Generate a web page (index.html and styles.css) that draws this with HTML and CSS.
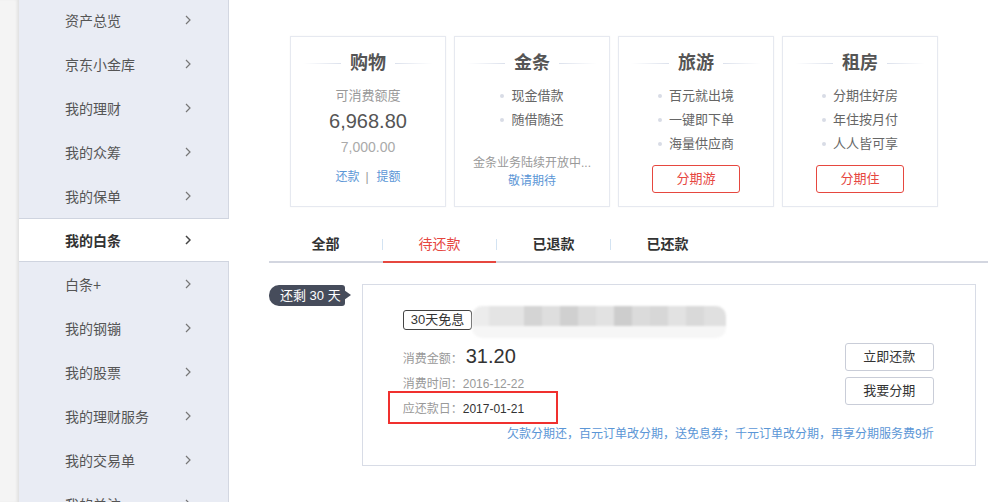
FILE: index.html
```html
<!DOCTYPE html>
<html lang="zh-CN">
<head>
    <meta charset="UTF-8">
    <title>我的白条</title>
    <link rel="stylesheet" href="styles.css">
</head>
<body>
    <div class="page">
        <div class="edge"></div>

        <ul class="side-nav">
            <li class="nav-item"><span>资产总览</span><svg class="chev" viewBox="0 0 6 10"><path d="M1 1l4 4-4 4"/></svg></li>
            <li class="nav-item"><span>京东小金库</span><svg class="chev" viewBox="0 0 6 10"><path d="M1 1l4 4-4 4"/></svg></li>
            <li class="nav-item"><span>我的理财</span><svg class="chev" viewBox="0 0 6 10"><path d="M1 1l4 4-4 4"/></svg></li>
            <li class="nav-item"><span>我的众筹</span><svg class="chev" viewBox="0 0 6 10"><path d="M1 1l4 4-4 4"/></svg></li>
            <li class="nav-item"><span>我的保单</span><svg class="chev" viewBox="0 0 6 10"><path d="M1 1l4 4-4 4"/></svg></li>
            <li class="nav-item active"><span>我的白条</span><svg class="chev" viewBox="0 0 6 10"><path d="M1 1l4 4-4 4"/></svg></li>
            <li class="nav-item"><span>白条+</span><svg class="chev" viewBox="0 0 6 10"><path d="M1 1l4 4-4 4"/></svg></li>
            <li class="nav-item"><span>我的钢镚</span><svg class="chev" viewBox="0 0 6 10"><path d="M1 1l4 4-4 4"/></svg></li>
            <li class="nav-item"><span>我的股票</span><svg class="chev" viewBox="0 0 6 10"><path d="M1 1l4 4-4 4"/></svg></li>
            <li class="nav-item"><span>我的理财服务</span><svg class="chev" viewBox="0 0 6 10"><path d="M1 1l4 4-4 4"/></svg></li>
            <li class="nav-item"><span>我的交易单</span><svg class="chev" viewBox="0 0 6 10"><path d="M1 1l4 4-4 4"/></svg></li>
            <li class="nav-item"><span>我的关注</span><svg class="chev" viewBox="0 0 6 10"><path d="M1 1l4 4-4 4"/></svg></li>
        </ul>

        <div class="main">
            <div class="cards">
                <div class="card">
                    <h3 class="card-title"><span>购物</span></h3>
                    <p class="sub">可消费额度</p>
                    <p class="amount">6,968.80</p>
                    <p class="total">7,000.00</p>
                    <p class="links"><a>还款</a><i>|</i><a>提额</a></p>
                </div>
                <div class="card">
                    <h3 class="card-title"><span>金条</span></h3>
                    <ul class="points">
                        <li>现金借款</li>
                        <li>随借随还</li>
                    </ul>
                    <p class="note">金条业务陆续开放中...</p>
                    <p class="wait">敬请期待</p>
                </div>
                <div class="card">
                    <h3 class="card-title"><span>旅游</span></h3>
                    <ul class="points">
                        <li>百元就出境</li>
                        <li>一键即下单</li>
                        <li>海量供应商</li>
                    </ul>
                    <a class="red-btn">分期游</a>
                </div>
                <div class="card">
                    <h3 class="card-title"><span>租房</span></h3>
                    <ul class="points">
                        <li>分期住好房</li>
                        <li>年住按月付</li>
                        <li>人人皆可享</li>
                    </ul>
                    <a class="red-btn">分期住</a>
                </div>
            </div>

            <div class="tabs">
                <a class="tab">全部</a>
                <span class="sep"></span>
                <a class="tab active">待还款</a>
                <span class="sep"></span>
                <a class="tab">已退款</a>
                <span class="sep"></span>
                <a class="tab">已还款</a>
            </div>

            <div class="order-row">
                <div class="days">还剩 30 天</div>
                <div class="order">
                    <div class="order-head">
                        <span class="tag">30天免息</span>
                        <span class="blur"></span>
                    </div>
                    <div class="order-body">
                        <div class="info">
                            <p class="line big"><span class="label">消费金额：</span><span class="money">31.20</span></p>
                            <p class="line"><span class="label">消费时间：</span><span class="gray">2016-12-22</span></p>
                            <p class="line due"><span class="label">应还款日：</span><span>2017-01-21</span></p>
                        </div>
                        <div class="actions">
                            <a class="btn">立即还款</a>
                            <a class="btn">我要分期</a>
                        </div>
                    </div>
                    <p class="promo">欠款分期还，百元订单改分期，送免息券；千元订单改分期，再享分期服务费9折</p>
                </div>
            </div>
        </div>
    </div>
</body>
</html>
```

FILE: styles.css
```css
body {
    margin: 0;
    font-family: "Liberation Sans", "Noto Sans CJK SC", sans-serif;
    color: #333;
    background-color: #fff;
    overflow: hidden;
}

p, ul, h3 {
    margin: 0;
    padding: 0;
}

ul {
    list-style: none;
}

a {
    cursor: pointer;
}

.page {
    display: flex;
    height: 502px;
}

.edge {
    width: 19px;
    flex-shrink: 0;
    background-color: #f4f4f4;
    box-shadow: inset -3px 0 3px -1px rgba(0, 0, 0, 0.08);
}

/* side menu */
.side-nav {
    width: 209px;
    flex-shrink: 0;
    margin-top: -2px;
    background-color: #e9ecf4;
    border-right: 1px solid #d3d7e1;
}

.nav-item {
    height: 44px;
    display: flex;
    align-items: center;
    justify-content: space-between;
    padding: 0 37px 0 46px;
    font-size: 14px;
    color: #555;
    box-sizing: border-box;
}

.nav-item.active {
    background-color: #fff;
    border-top: 1px solid #cfd4df;
    border-bottom: 1px solid #cfd4df;
    margin-right: -1px;
    padding-right: 38px;
    font-weight: bold;
    color: #333;
}

.chev {
    width: 6px;
    height: 10px;
    fill: none;
    stroke: #777;
    stroke-width: 1.2;
}

.active .chev {
    stroke: #444;
    stroke-width: 1.5;
}

/* main */
.main {
    flex: 1;
    padding: 36px 12px 0 40px;
}

.cards {
    display: flex;
    gap: 8px;
    margin-left: 21px;
}

.card {
    width: 156px;
    height: 171px;
    box-sizing: border-box;
    border: 1px solid #e6e9f0;
    box-shadow: 0 0 2px rgba(0, 0, 0, 0.04);
    text-align: center;
    padding-top: 14px;
}

.card-title {
    display: flex;
    align-items: center;
    justify-content: center;
    gap: 9px;
    font-size: 18px;
    line-height: 24px;
    color: #555;
}

.card-title::before,
.card-title::after {
    content: "";
    width: 38px;
    height: 1px;
}

.card-title::before {
    background: linear-gradient(to right, rgba(220, 225, 236, 0), #dce1ec);
}

.card-title::after {
    background: linear-gradient(to left, rgba(220, 225, 236, 0), #dce1ec);
}

.sub {
    margin-top: 11px;
    font-size: 13px;
    line-height: 20px;
    color: #999;
}

.amount {
    margin-top: 1px;
    font-size: 20px;
    line-height: 28px;
    color: #555;
}

.total {
    font-size: 14px;
    line-height: 24px;
    color: #aaa;
}

.links {
    margin-top: 8px;
    font-size: 12px;
    line-height: 20px;
    color: #5b96d6;
}

.links i {
    font-style: normal;
    color: #999;
    margin: 0 8px 0 6px;
}

.points {
    margin-top: 9px;
}

.points li {
    font-size: 13px;
    line-height: 24px;
    color: #666;
}

.points li::before {
    content: "";
    display: inline-block;
    width: 4px;
    height: 4px;
    border-radius: 50%;
    background-color: #d8dce6;
    vertical-align: middle;
    margin: -2px 7px 0 0;
}

.note {
    margin-top: 22px;
    font-size: 12px;
    line-height: 18px;
    color: #999;
}

.wait {
    font-size: 12px;
    line-height: 18px;
    color: #5b96d6;
}

.red-btn {
    display: block;
    width: 86px;
    height: 26px;
    line-height: 26px;
    margin: 9px auto 0;
    border: 1px solid #e6473f;
    border-radius: 3px;
    font-size: 13px;
    color: #e6473f;
}

/* tabs */
.tabs {
    display: flex;
    align-items: center;
    margin-top: 20px;
    height: 34px;
    border-bottom: 2px solid #d3d6e0;
}

.tab {
    width: 113px;
    height: 34px;
    line-height: 34px;
    text-align: center;
    font-size: 14px;
    font-weight: bold;
    color: #333;
    box-sizing: border-box;
}

.tab.active {
    color: #e6473f;
    border-bottom: 2px solid #e6473f;
    height: 36px;
    margin-bottom: -2px;
    font-weight: normal;
}

.sep {
    width: 1px;
    height: 11px;
    background-color: #d3e3f2;
}

/* order */
.order-row {
    display: flex;
    align-items: flex-start;
    gap: 17px;
    margin-top: 21px;
}

.days {
    position: relative;
    flex-shrink: 0;
    height: 21px;
    line-height: 21px;
    margin-top: 1px;
    padding: 0 4px 0 11px;
    white-space: nowrap;
    background-color: #464c5b;
    border-radius: 10px 3px 3px 10px;
    font-size: 13px;
    color: #fff;
}

.days::after {
    content: "";
    position: absolute;
    right: -6px;
    top: 5px;
    border-left: 7px solid #464c5b;
    border-top: 5px solid transparent;
    border-bottom: 5px solid transparent;
}

.order {
    width: 614px;
    height: 182px;
    box-sizing: border-box;
    border: 1px solid #d8dce6;
    padding: 21px 41px 0 40px;
}

.order-head {
    display: flex;
    align-items: center;
    height: 32px;
}

.tag {
    height: 18px;
    line-height: 18px;
    padding: 0 7px;
    border: 1px solid #444;
    border-radius: 3px;
    font-size: 13px;
    color: #333;
    margin-top: -4px;
}

.blur {
    width: 254px;
    height: 32px;
    border-radius: 10px;
    background:
        linear-gradient(to bottom, transparent 0, transparent 20px, #f6f6f6 20px),
        linear-gradient(to right,
            #ececec 0, #ececec 17px,
            #e4e4e4 17px, #e4e4e4 52px,
            #d4d4d4 52px, #d4d4d4 70px,
            #dedede 70px, #dedede 88px,
            #d0d0d0 88px, #d0d0d0 106px,
            #dcdcdc 106px, #dcdcdc 124px,
            #e2e2e2 124px, #e2e2e2 142px,
            #cdcdcd 142px, #cdcdcd 160px,
            #dbdbdb 160px, #dbdbdb 178px,
            #d7d7d7 178px, #d7d7d7 196px,
            #e2e2e2 196px, #e2e2e2 214px,
            #d9d9d9 214px, #d9d9d9 232px,
            #e0e0e0 232px);
    background-size: 100% 100%, 100% 20px;
    background-repeat: no-repeat;
    filter: blur(1px);
}

.order-body {
    display: flex;
    justify-content: space-between;
    align-items: flex-start;
}

.info {
    padding-top: 4px;
}

.line {
    font-size: 12px;
    line-height: 20px;
    color: #333;
}

.line.big {
    line-height: 28px;
}

.label {
    font-family: "Noto Sans CJK SC", sans-serif;
    color: #999;
}

.money {
    font-size: 20px;
    color: #333;
    margin-left: 3px;
}

.gray {
    color: #999;
}

.due {
    margin: -3px 0 0 -15px;
    width: 170px;
    height: 33px;
    line-height: 29px;
    padding-left: 13px;
    box-sizing: border-box;
    border: 2px solid #f0302e;
}

.actions {
    display: flex;
    flex-direction: column;
    gap: 6px;
    margin-top: 5px;
}

.btn {
    width: 89px;
    height: 28px;
    line-height: 26px;
    box-sizing: border-box;
    text-align: center;
    border: 1px solid #c9cdd8;
    border-radius: 3px;
    font-size: 13px;
    color: #333;
}

.promo {
    margin-top: 2px;
    text-align: right;
    font-size: 12px;
    line-height: 16px;
    color: #5b96d6;
}
```
